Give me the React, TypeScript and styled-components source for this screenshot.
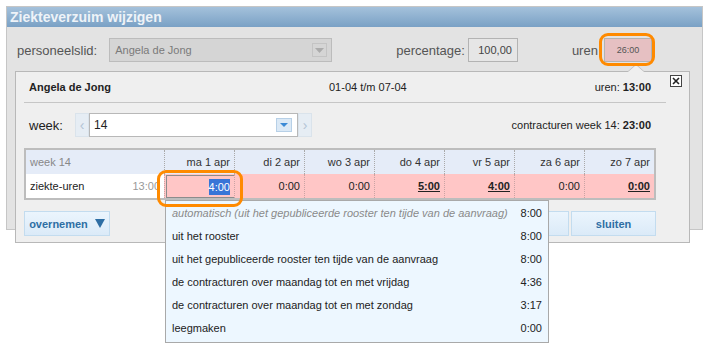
import React from 'react';
import styled, { createGlobalStyle } from 'styled-components';

const GlobalStyle = createGlobalStyle`
  html, body {
    margin: 0;
    padding: 0;
    background: #fff;
  }
  body {
    font-family: "Liberation Sans", Arial, sans-serif;
    font-size: 11px;
    color: #222;
  }
`;

const Page = styled.div`
  width: 706px;
  height: 349px;
  box-sizing: border-box;
  padding: 6px 0 0 6px;
  overflow: hidden;
`;

const Dialog = styled.div`
  position: relative;
  width: 697px;
  height: 224px;
  box-sizing: border-box;
  background: #e3e3e3;
  border: 1px solid #c6c6c6;
`;

const TitleBar = styled.div`
  height: 20px;
  line-height: 20px;
  padding-left: 3px;
  background: linear-gradient(#a4c1db, #7aa1c5);
  color: #eef3f8;
  font-size: 14px;
  font-weight: bold;
`;

const FormRow = styled.div`
  display: flex;
  align-items: center;
  height: 24px;
  margin-top: 11px;
  padding-left: 10px;
`;

const FieldLabel = styled.span<{ $gap?: number }>`
  margin-left: ${(p) => p.$gap ?? 0}px;
  font-size: 13px;
  color: #555;
`;

const DisabledSelect = styled.div`
  display: flex;
  align-items: center;
  justify-content: space-between;
  width: 223px;
  height: 24px;
  box-sizing: border-box;
  margin-left: 12px;
  padding: 0 4px 0 5px;
  background: #d5d5d5;
  border: 1px solid #bcbcbc;
  color: #7a7a7a;
  font-size: 11px;
`;

const DisabledArrow = styled.span`
  display: flex;
  align-items: center;
  justify-content: center;
  width: 15px;
  height: 14px;
  box-sizing: border-box;
  border: 1px solid #c4c4c4;
`;

const ValueBox = styled.div<{ $w: number; $gap: number; $pink?: boolean }>`
  position: relative;
  display: flex;
  align-items: center;
  justify-content: ${(p) => (p.$pink ? 'center' : 'flex-end')};
  width: ${(p) => p.$w}px;
  height: 24px;
  box-sizing: border-box;
  margin-left: ${(p) => p.$gap}px;
  padding-right: ${(p) => (p.$pink ? 0 : 5)}px;
  background: ${(p) => (p.$pink ? '#e6c0c2' : '#e6e6e6')};
  border: 1px solid #b3b3b3;
  color: ${(p) => (p.$pink ? '#555' : '#444')};
  font-size: ${(p) => (p.$pink ? 9 : 11)}px;
`;

const Ring = styled.span<{ $l: number; $t: number; $w: number; $h: number }>`
  position: absolute;
  left: ${(p) => p.$l}px;
  top: ${(p) => p.$t}px;
  width: ${(p) => p.$w}px;
  height: ${(p) => p.$h}px;
  box-sizing: border-box;
  border: 3px solid #ff8a00;
  border-radius: 9px;
  z-index: 5;
  pointer-events: none;
`;

const Popup = styled.div`
  position: absolute;
  left: 8px;
  top: 64px;
  width: 675px;
  height: 172px;
  box-sizing: border-box;
  padding: 0 33px 0 8px;
  background: #efefef;
  border: 1px solid #b8b8b8;
  z-index: 2;

  &::before,
  &::after {
    content: '';
    position: absolute;
    left: 611px;
    border-left: 9px solid transparent;
    border-right: 9px solid transparent;
  }
  &::before {
    top: -8px;
    border-bottom: 8px solid #bdbdbd;
  }
  &::after {
    top: -7px;
    left: 612px;
    border-left-width: 8px;
    border-right-width: 8px;
    border-bottom: 7px solid #efefef;
  }
`;

const CloseButton = styled.span`
  position: absolute;
  top: 3px;
  right: 7px;
  display: flex;
  align-items: center;
  justify-content: center;
  width: 12px;
  height: 12px;
  box-sizing: border-box;
  background: #fff;
  border: 1px solid #444;
`;

const Header = styled.div`
  display: flex;
  align-items: center;
  height: 30px;
  margin-right: -10px;
  padding: 0 15px 0 5px;
  border-bottom: 1px solid #c6c6c6;
`;

const Name = styled.span`
  flex: 0 0 300px;
  font-weight: bold;
`;

const RightInfo = styled.span`
  margin-left: auto;
`;

const WeekRow = styled.div`
  display: flex;
  align-items: center;
  height: 24px;
  margin-top: 10px;
  padding: 0 5px;
`;

const WeekLabel = styled.span`
  flex: 0 0 46px;
  font-size: 13px;
  color: #222;
`;

const NavButton = styled.span`
  display: flex;
  align-items: center;
  justify-content: center;
  width: 14px;
  height: 24px;
  box-sizing: border-box;
  background: #e6edf4;
  border: 1px solid #dae3eb;
  color: #b3c4d5;
  font-size: 14px;
`;

const WeekSelect = styled.div`
  display: flex;
  align-items: center;
  justify-content: space-between;
  width: 209px;
  height: 24px;
  box-sizing: border-box;
  padding: 0 5px 0 4px;
  background: #fff;
  border: 1px solid #b8b8b8;
  font-size: 12px;
  color: #222;
`;

const ArrowButton = styled.span`
  display: flex;
  align-items: center;
  justify-content: center;
  width: 16px;
  height: 14px;
  box-sizing: border-box;
  background: #dbe9f6;
  border: 1px solid #b7d0e7;
`;

const Table = styled.div`
  display: grid;
  grid-template-columns: 138px repeat(7, 70px);
  grid-template-rows: 24px 24px;
  margin-top: 11px;
  border: 2px solid #bdbdbd;
`;

const HeadCell = styled.div<{ $first?: boolean }>`
  display: flex;
  align-items: center;
  justify-content: ${(p) => (p.$first ? 'flex-start' : 'flex-end')};
  padding: 0 4px;
  background: #e5ecf8;
  border-left: ${(p) => (p.$first ? 'none' : '1px dotted #a9a9a9')};
  color: ${(p) => (p.$first ? '#888' : '#333')};
`;

const NameCell = styled.div`
  display: flex;
  align-items: center;
  justify-content: space-between;
  padding: 0 4px;
  background: #fff;
`;

const Muted = styled.span`
  color: #999;
`;

const DayCell = styled.div<{ $strong?: boolean }>`
  position: relative;
  display: flex;
  align-items: center;
  justify-content: flex-end;
  padding: 0 4px;
  background: #ffc6c6;
  border-left: 1px dotted #c9a4a4;
  font-weight: ${(p) => (p.$strong ? 'bold' : 'normal')};
  text-decoration: ${(p) => (p.$strong ? 'underline' : 'none')};
  color: #222;
`;

const EditBox = styled.div`
  display: flex;
  align-items: center;
  justify-content: flex-end;
  width: 70px;
  height: 23px;
  box-sizing: border-box;
  margin: 1px -5px 0 -3px;
  padding-right: 4px;
  border: 1px solid #8c8c8c;
  background: #ffc6c6;
`;

const Selected = styled.span`
  padding: 2px 0;
  background: #3875d7;
  color: #fff;
`;

const Dropdown = styled.ul`
  position: absolute;
  left: 0;
  top: 26px;
  width: 384px;
  height: 143px;
  box-sizing: border-box;
  margin: 0;
  padding: 0;
  list-style: none;
  background: #edf7ff;
  border: 1px solid #a9a9a9;
  z-index: 4;
  font-weight: normal;
  text-decoration: none;
`;

const Option = styled.li<{ $hint?: boolean }>`
  display: flex;
  align-items: center;
  justify-content: space-between;
  height: 23px;
  padding: 0 6px;
  color: #222;

  & > span:first-child {
    font-style: ${(p) => (p.$hint ? 'italic' : 'normal')};
    color: ${(p) => (p.$hint ? '#8a8a8a' : '#222')};
  }
`;

const ButtonRow = styled.div`
  display: flex;
  gap: 2px;
  margin-top: 11px;
`;

const Button = styled.span<{ $w: number; $push?: boolean }>`
  display: flex;
  align-items: center;
  justify-content: center;
  gap: 7px;
  width: ${(p) => p.$w}px;
  height: 25px;
  box-sizing: border-box;
  margin-left: ${(p) => (p.$push ? 'auto' : '0')};
  background: linear-gradient(#ebf5fd, #dbeaf8);
  border: 1px solid #c3dcef;
  color: #2e6ea4;
  font-weight: bold;
`;

const days = [
  { label: 'ma 1 apr', value: '4:00', edit: true },
  { label: 'di 2 apr', value: '0:00' },
  { label: 'wo 3 apr', value: '0:00' },
  { label: 'do 4 apr', value: '5:00', strong: true },
  { label: 'vr 5 apr', value: '4:00', strong: true },
  { label: 'za 6 apr', value: '0:00' },
  { label: 'zo 7 apr', value: '0:00', strong: true },
];

const options = [
  { text: 'automatisch (uit het gepubliceerde rooster ten tijde van de aanvraag)', value: '8:00', hint: true },
  { text: 'uit het rooster', value: '8:00' },
  { text: 'uit het gepubliceerde rooster ten tijde van de aanvraag', value: '8:00' },
  { text: 'de contracturen over maandag tot en met vrijdag', value: '4:36' },
  { text: 'de contracturen over maandag tot en met zondag', value: '3:17' },
  { text: 'leegmaken', value: '0:00' },
];

function Triangle({ color, w = 8, h = 5 }: { color: string; w?: number; h?: number }) {
  return (
    <svg width={w} height={h} viewBox={`0 0 ${w} ${h}`}>
      <polygon points={`0,0 ${w},0 ${w / 2},${h}`} fill={color} />
    </svg>
  );
}

function HoursDropdown() {
  return (
    <Dropdown>
      {options.map((o) => (
        <Option key={o.text} $hint={o.hint}>
          <span>{o.text}</span>
          <span>{o.value}</span>
        </Option>
      ))}
    </Dropdown>
  );
}

export default function App() {
  return (
    <Page>
      <GlobalStyle />
      <Dialog>
        <TitleBar>Ziekteverzuim wijzigen</TitleBar>
        <FormRow>
          <FieldLabel>personeelslid:</FieldLabel>
          <DisabledSelect>
            Angela de Jong
            <DisabledArrow>
              <Triangle color="#ababab" w={9} h={5} />
            </DisabledArrow>
          </DisabledSelect>
          <FieldLabel $gap={64}>percentage:</FieldLabel>
          <ValueBox $w={50} $gap={3}>100,00</ValueBox>
          <FieldLabel $gap={54}>uren</FieldLabel>
          <ValueBox $w={48} $gap={6} $pink>
            26:00
            <Ring $l={-6} $t={-6} $w={56} $h={33} />
          </ValueBox>
        </FormRow>

        <Popup>
          <CloseButton>
            <svg width="8" height="8" viewBox="0 0 8 8">
              <path d="M1 1 L7 7 M7 1 L1 7" stroke="#222" strokeWidth="1.6" />
            </svg>
          </CloseButton>
          <Header>
            <Name>Angela de Jong</Name>
            <span>01-04 t/m 07-04</span>
            <RightInfo>
              uren: <b>13:00</b>
            </RightInfo>
          </Header>

          <WeekRow>
            <WeekLabel>week:</WeekLabel>
            <NavButton>‹</NavButton>
            <WeekSelect>
              14
              <ArrowButton>
                <Triangle color="#3b8ad6" w={8} h={4} />
              </ArrowButton>
            </WeekSelect>
            <NavButton>›</NavButton>
            <RightInfo>
              contracturen week 14: <b>23:00</b>
            </RightInfo>
          </WeekRow>

          <Table>
            <HeadCell $first>week 14</HeadCell>
            {days.map((d) => (
              <HeadCell key={d.label}>{d.label}</HeadCell>
            ))}
            <NameCell>
              <span>ziekte-uren</span>
              <Muted>13:00</Muted>
            </NameCell>
            {days.map((d) =>
              d.edit ? (
                <DayCell key={d.label}>
                  <EditBox>
                    <Selected>{d.value}</Selected>
                  </EditBox>
                  <HoursDropdown />
                  <Ring $l={-8} $t={-4} $w={86} $h={37} />
                </DayCell>
              ) : (
                <DayCell key={d.label} $strong={d.strong}>
                  {d.value}
                </DayCell>
              )
            )}
          </Table>

          <ButtonRow>
            <Button $w={86}>
              overnemen
              <Triangle color="#2e6ea4" w={10} h={9} />
            </Button>
            {/* covered by the hours dropdown in this state */}
            <Button $w={85} $push aria-label="opslaan" />
            <Button $w={85}>sluiten</Button>
          </ButtonRow>
        </Popup>
      </Dialog>
    </Page>
  );
}
